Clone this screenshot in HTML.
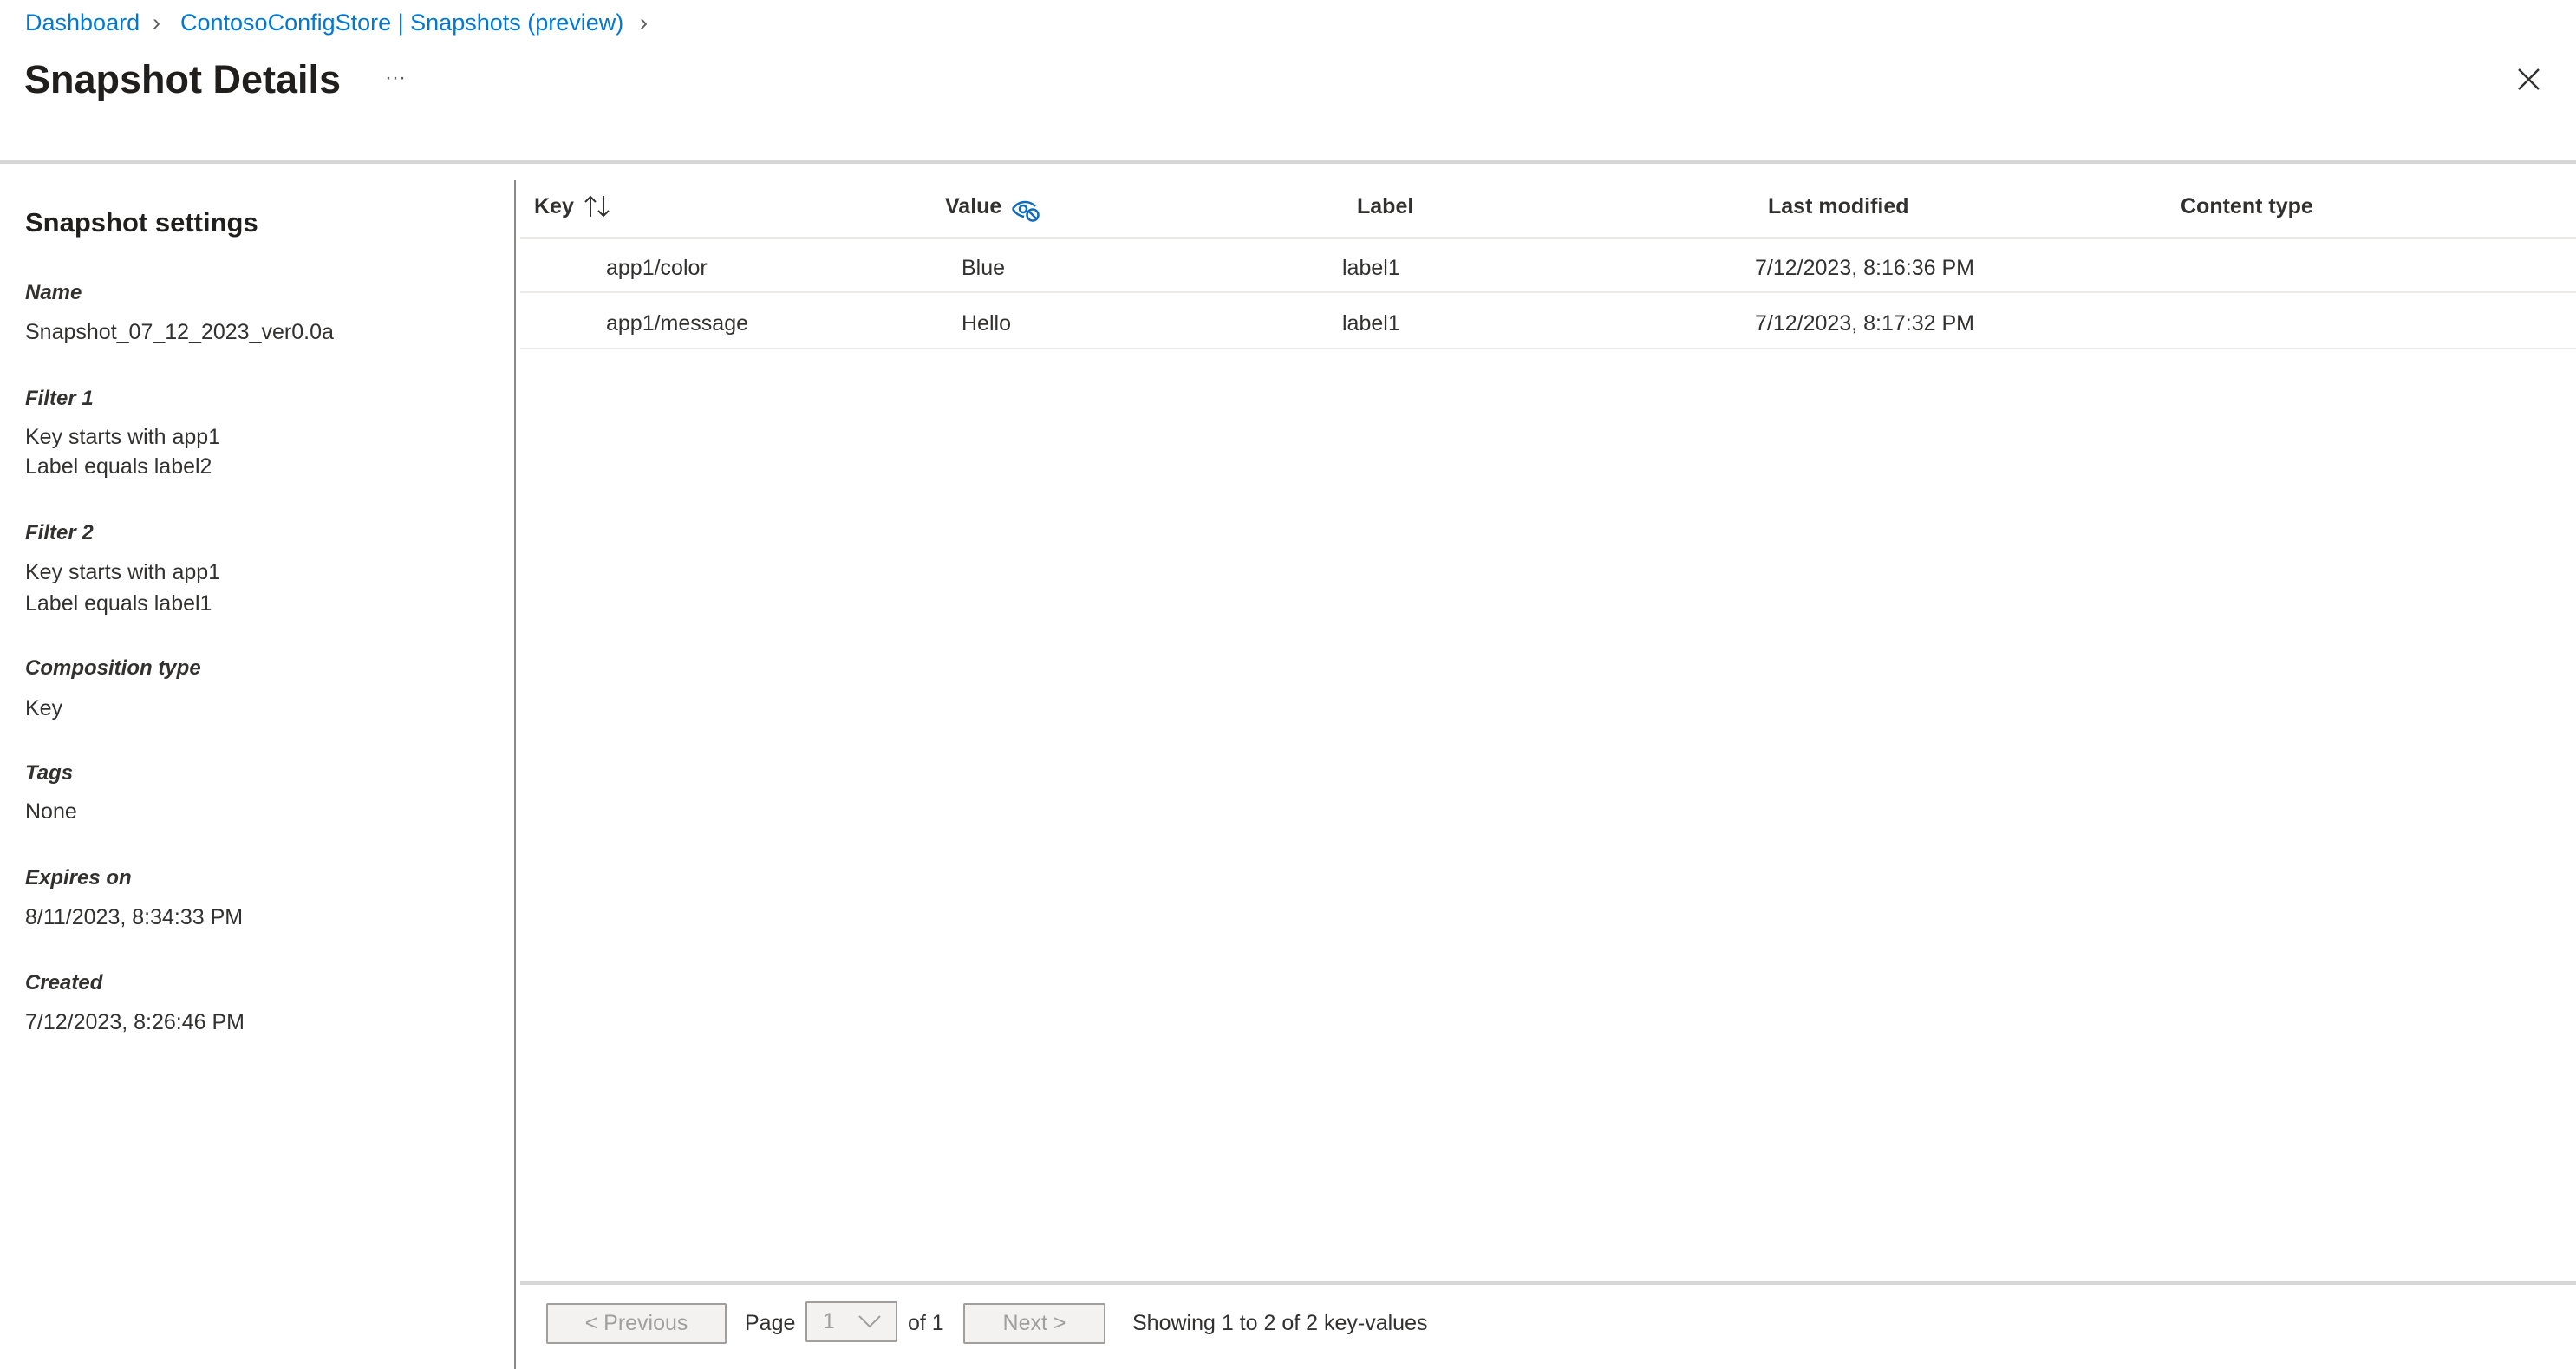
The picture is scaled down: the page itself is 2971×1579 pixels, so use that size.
<!DOCTYPE html>
<html><head><meta charset="utf-8"><style>
*{margin:0;padding:0;box-sizing:border-box}
body{width:2971px;height:1579px;overflow:hidden;background:#fff;font-family:"Segoe UI","Liberation Sans",sans-serif;color:#323130;position:relative}
.a{position:absolute;white-space:nowrap}
.bc{font-size:27px;color:#0078d4;top:11px}
.lab{font-size:24px;font-style:italic;font-weight:bold;left:29px}
.val{font-size:25px;left:29px}
.th{font-size:25px;font-weight:bold;top:224px}
.td{font-size:25px}
.btn{position:absolute;border:2px solid #a19f9d;background:#f3f2f1;color:#a19f9d;font-size:25px;text-align:center;border-radius:2px}
</style></head><body>
<div class="a bc" style="left:29px">Dashboard</div>
<div class="a" style="left:176px;top:11px;font-size:27px;color:#605e5c">›</div>
<div class="a bc" style="left:208px">ContosoConfigStore | Snapshots (preview)</div>
<div class="a" style="left:738px;top:11px;font-size:27px;color:#605e5c">›</div>
<div class="a" style="left:28px;top:66px;font-size:45px;font-weight:bold;color:#201f1e">Snapshot Details</div>
<div class="a" style="left:444px;top:76px;font-size:24px;color:#605e5c">···</div>
<svg class="a" style="left:2904px;top:79px" width="25" height="25" viewBox="0 0 25 25"><path d="M1 1L24 24M24 1L1 24" stroke="#323130" stroke-width="2.4"/></svg>
<div class="a" style="left:0;top:185px;width:2971px;height:4px;background:#d6d6d6"></div>
<div class="a" style="left:593px;top:208px;width:2px;height:1371px;background:#8a8886"></div>

<div class="a" style="left:29px;top:239px;font-size:31px;font-weight:bold;color:#201f1e">Snapshot settings</div>
<div class="a lab" style="top:324px">Name</div>
<div class="a val" style="top:369px">Snapshot_07_12_2023_ver0.0a</div>
<div class="a lab" style="top:446px">Filter 1</div>
<div class="a val" style="top:490px">Key starts with app1</div>
<div class="a val" style="top:524px">Label equals label2</div>
<div class="a lab" style="top:601px">Filter 2</div>
<div class="a val" style="top:646px">Key starts with app1</div>
<div class="a val" style="top:682px">Label equals label1</div>
<div class="a lab" style="top:757px">Composition type</div>
<div class="a val" style="top:803px">Key</div>
<div class="a lab" style="top:878px">Tags</div>
<div class="a val" style="top:922px">None</div>
<div class="a lab" style="top:999px">Expires on</div>
<div class="a val" style="top:1044px">8/11/2023, 8:34:33 PM</div>
<div class="a lab" style="top:1120px">Created</div>
<div class="a val" style="top:1165px">7/12/2023, 8:26:46 PM</div>

<div class="a th" style="left:616px">Key</div>
<svg class="a" style="left:672px;top:224px" width="36" height="28" viewBox="0 0 36 28"><path d="M9 26V3M3 9L9 3L15 9M24 2V25M18 19L24 25L30 19" stroke="#323130" stroke-width="2" fill="none"/></svg>
<div class="a th" style="left:1090px">Value</div>
<svg class="a" style="left:1166px;top:230px" width="34" height="26" viewBox="0 0 34 26"><path d="M2 11C8 2 20 0 28 8" stroke="#0f6cbd" stroke-width="2.5" fill="none"/><path d="M2 11C5 16 10 19 15 20" stroke="#0f6cbd" stroke-width="2.5" fill="none"/><circle cx="14" cy="11" r="4" stroke="#0f6cbd" stroke-width="2.5" fill="none"/><circle cx="25" cy="18" r="6.5" stroke="#0f6cbd" stroke-width="2.5" fill="#fff"/><path d="M21 14L29 22" stroke="#0f6cbd" stroke-width="2.5"/></svg>
<div class="a th" style="left:1565px">Label</div>
<div class="a th" style="left:2039px">Last modified</div>
<div class="a th" style="left:2515px">Content type</div>
<div class="a" style="left:600px;top:273px;width:2371px;height:3px;background:#edebe9"></div>
<div class="a td" style="left:699px;top:295px">app1/color</div>
<div class="a td" style="left:1109px;top:295px">Blue</div>
<div class="a td" style="left:1548px;top:295px">label1</div>
<div class="a td" style="left:2024px;top:295px">7/12/2023, 8:16:36 PM</div>
<div class="a" style="left:600px;top:336px;width:2371px;height:2px;background:#edebe9"></div>
<div class="a td" style="left:699px;top:359px">app1/message</div>
<div class="a td" style="left:1109px;top:359px">Hello</div>
<div class="a td" style="left:1548px;top:359px">label1</div>
<div class="a td" style="left:2024px;top:359px">7/12/2023, 8:17:32 PM</div>
<div class="a" style="left:600px;top:401px;width:2371px;height:2px;background:#edebe9"></div>

<div class="a" style="left:600px;top:1478px;width:2371px;height:4px;background:#d6d6d6"></div>
<div class="btn" style="left:630px;top:1503px;width:208px;height:47px;line-height:43px">&lt; Previous</div>
<div class="a td" style="left:859px;top:1512px">Page</div>
<div class="btn" style="left:929px;top:1501px;width:106px;height:47px;line-height:43px;text-align:left;padding-left:18px">1</div>
<svg class="a" style="left:990px;top:1517px" width="26" height="15" viewBox="0 0 26 15"><path d="M1 1L13 13L25 1" stroke="#a19f9d" stroke-width="2" fill="none"/></svg>
<div class="a td" style="left:1047px;top:1512px">of 1</div>
<div class="btn" style="left:1111px;top:1503px;width:164px;height:47px;line-height:43px">Next &gt;</div>
<div class="a td" style="left:1306px;top:1512px">Showing 1 to 2 of 2 key-values</div>
</body></html>
